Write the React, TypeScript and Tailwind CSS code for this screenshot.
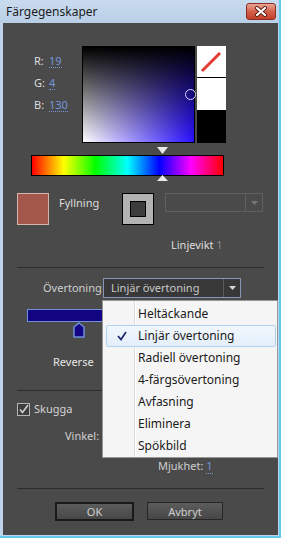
import React from 'react'

const menuItems = [
  'Heltäckande',
  'Linjär övertoning',
  'Radiell övertoning',
  '4-färgsövertoning',
  'Avfasning',
  'Eliminera',
  'Spökbild',
]

const Value = ({ children }: { children: React.ReactNode }) => (
  <span className="text-[#7595dc] border-b border-dotted border-[#7595dc] leading-[12px]">{children}</span>
)

const App = () => {
  return (
    <div
      className="w-[281px] h-[538px] flex flex-col bg-[#bfd3ea] border-r-2 border-b-2 border-[#62c9e9] overflow-hidden"
      style={{ fontFamily: '"Noto Sans", "Open Sans", sans-serif' }}
    >
      {/* Title bar */}
      <div className="h-[23px] flex items-start justify-between pl-[6px] pr-[3px] bg-gradient-to-b from-[#c9dbee] to-[#b9cfe7]">
        <span className="text-[12px] leading-[23px] text-[#1b1b1b]">Färgegenskaper</span>
        <div className="mt-[3px] w-[30px] h-[17px] rounded-[3px] border border-[#8b2d22] bg-gradient-to-b from-[#e9a597] via-[#d3604b] to-[#c43d27] flex items-center justify-center">
          <svg width="14" height="11" viewBox="0 0 14 11">
            <path d="M3 2 L11 9 M11 2 L3 9" stroke="#5a1a12" strokeWidth="4" strokeLinecap="round" />
            <path d="M3 2 L11 9 M11 2 L3 9" stroke="#ffffff" strokeWidth="2.2" strokeLinecap="round" />
          </svg>
        </div>
      </div>

      {/* Content */}
      <div className="relative flex-1 ml-[3px] mr-[1px] mb-px bg-[#4a4a4a] pt-[23px] text-[11px] text-[#dedede]">
        {/* Colour picker row */}
        <div className="flex h-[97px]">
          <div className="ml-[31px] w-[48px] flex flex-col pt-[7px] gap-[6px]">
            <div className="h-[16px] flex items-center gap-[4px]"><span className="w-[11px]">R:</span><Value>19</Value></div>
            <div className="h-[16px] flex items-center gap-[4px]"><span className="w-[11px]">G:</span><Value>4</Value></div>
            <div className="h-[16px] flex items-center gap-[4px]"><span className="w-[11px]">B:</span><Value>130</Value></div>
          </div>
          <div className="relative w-[113px] h-[97px] border border-black bg-[linear-gradient(to_bottom,#000,rgba(0,0,0,0)),linear-gradient(to_right,#fff,#2a10ff)]">
            <div className="absolute left-[102px] top-[42px] w-[11px] h-[11px] rounded-full border-[1.5px] border-[#d6d2ff]" />
          </div>
          <div className="ml-[2px] w-[29px] h-[97px] bg-black flex flex-col">
            <div className="h-[31px] bg-white">
              <svg width="29" height="31" viewBox="0 0 29 31">
                <path d="M5 25 L23 7" stroke="#e23a32" strokeWidth="3" />
              </svg>
            </div>
            <div className="h-[32px] mt-px bg-white" />
          </div>
        </div>

        {/* Hue bar */}
        <div className="relative ml-[28px] mt-[12px] w-[193px] h-[21px] border border-black bg-[linear-gradient(to_right,#ff0000,#ffff00,#00ff00,#00ffff,#0000ff,#ff00ff,#ff0000)]">
          <svg className="absolute left-[125px] top-[-9px]" width="11" height="7" viewBox="0 0 11 7">
            <path d="M0 0 L11 0 L5.5 7 Z" fill="#e8e8e8" />
          </svg>
          <svg className="absolute left-[125px] bottom-[-6px]" width="11" height="6" viewBox="0 0 11 6">
            <path d="M0 6 L11 6 L5.5 0 Z" fill="#e8e8e8" />
          </svg>
        </div>

        {/* Fill / stroke row */}
        <div className="flex mt-[17px] h-[32px]">
          <div className="ml-[14px] w-[32px] h-[32px] border border-[#d4b4ae] bg-[#a4574b]" />
          <div className="w-[73px] pl-[10px] pt-[2px] leading-[16px]">Fyllning</div>
          <div className="w-[32px] h-[32px] border border-black bg-[#b3b3b3] flex items-center justify-center">
            <div className="w-[16px] h-[16px] border border-black bg-[#3c3c3c]" />
          </div>
          <div className="ml-[11px] w-[98px] h-[19px] border border-[#5f5f5f] flex justify-end">
            <div className="w-[17px] h-full border-l border-[#5f5f5f] flex items-center justify-center">
              <svg width="7" height="4" viewBox="0 0 7 4"><path d="M0 0 L7 0 L3.5 4 Z" fill="#777" /></svg>
            </div>
          </div>
        </div>

        <div className="ml-[168px] mt-[12px] leading-[16px]">
          Linjevikt <span className="text-[#8a8a8a]">1</span>
        </div>

        <div className="mx-[14px] mt-[14px] h-px bg-[#2c2c2c]" />

        {/* Gradient row */}
        <div className="flex items-center mt-[10px] h-[20px]">
          <div className="ml-[40px] w-[60px] text-[#cfcfcf]">Övertoning</div>
          <div className="w-[138px] h-[20px] border border-[#8796b4] bg-[#383838] flex items-center">
            <span className="flex-1 pl-[7px] text-[#c9c9c9] leading-[16px]">Linjär övertoning</span>
            <div className="w-[17px] h-full border-l border-[#5a5a5a] flex items-center justify-center">
              <svg width="7" height="4" viewBox="0 0 7 4"><path d="M0 0 L7 0 L3.5 4 Z" fill="#d8d8d8" /></svg>
            </div>
          </div>
        </div>

        <div className="ml-[24px] mt-[11px] w-[215px] h-[13px] border border-[#6f90da] bg-[#130482]" />
        <svg className="ml-[70px] block" width="12" height="16" viewBox="0 0 12 16">
          <path d="M6 1 L11 5 L11 15 L1 15 L1 5 Z" fill="#130482" stroke="#6f90da" strokeWidth="1.5" />
        </svg>

        <div className="ml-[50px] mt-[16px] leading-[16px] text-[#e6e6e6]">Reverse</div>

        <div className="mx-[14px] mt-[20px] h-px bg-[#2c2c2c]" />

        <div className="flex items-center mt-[12px] h-[13px]">
          <svg className="ml-[14px]" width="13" height="13" viewBox="0 0 13 13">
            <rect x="0.5" y="0.5" width="12" height="12" fill="#3e3e3e" stroke="#b5b5b5" />
            <path d="M3 6.5 L5.5 9.5 L11 2" stroke="#d4d4d4" strokeWidth="1.6" fill="none" />
          </svg>
          <span className="ml-[4px] text-[#d4d4d4]">Skugga</span>
        </div>

        <div className="ml-[62px] mt-[12px] leading-[16px] text-[#cfcfcf]">
          Vinkel: <Value>135</Value>
        </div>

        <div className="ml-[155px] mt-[14px] leading-[16px] text-[#cfcfcf]">
          Mjukhet: <Value>1</Value>
        </div>

        <div className="mx-[14px] mt-[14px] h-px bg-[#2c2c2c]" />

        <div className="flex mt-[13px]">
          <button className="ml-[52px] w-[79px] h-[19px] border-2 border-[#1a1a1a] bg-gradient-to-b from-[#5c5c5c] to-[#474747] text-[#cfcfcf] text-[11px] leading-none">
            OK
          </button>
          <button className="ml-[13px] w-[76px] h-[18px] border border-[#262626] bg-gradient-to-b from-[#5c5c5c] to-[#474747] text-[#cfcfcf] text-[11px] leading-none">
            Avbryt
          </button>
        </div>

        {/* Open dropdown menu */}
        <div className="absolute left-[99px] top-[277px] z-10 w-[176px] h-[158px] border border-[#979797] bg-[#f5f5f5] py-[2px] text-[12px] text-[#1a1a1a]">
          <div className="absolute left-[31px] top-0 bottom-0 w-px bg-[#dcdcdc]" />
          <div className="absolute left-[32px] top-0 bottom-0 w-px bg-white" />
          {menuItems.map((item, i) => (
            <div
              key={item}
              className={
                i === 1
                  ? 'relative h-[22px] ml-[3px] mr-px flex items-center rounded-[2px] border border-[#aed3f2] bg-gradient-to-b from-[#f2f7fd] to-[#e3eefa]'
                  : 'relative h-[22px] ml-[3px] mr-px flex items-center border border-transparent'
              }
            >
              <span className="w-[14px] ml-[8px] flex items-center justify-center">
                {i === 1 && (
                  <svg width="10" height="10" viewBox="0 0 10 10">
                    <path d="M1 5 L4 8.5 L9 1" stroke="#1c2a6e" strokeWidth="1.7" fill="none" />
                  </svg>
                )}
              </span>
              <span className="ml-[9px]">{item}</span>
            </div>
          ))}
        </div>
      </div>
    </div>
  )
}

export default App
